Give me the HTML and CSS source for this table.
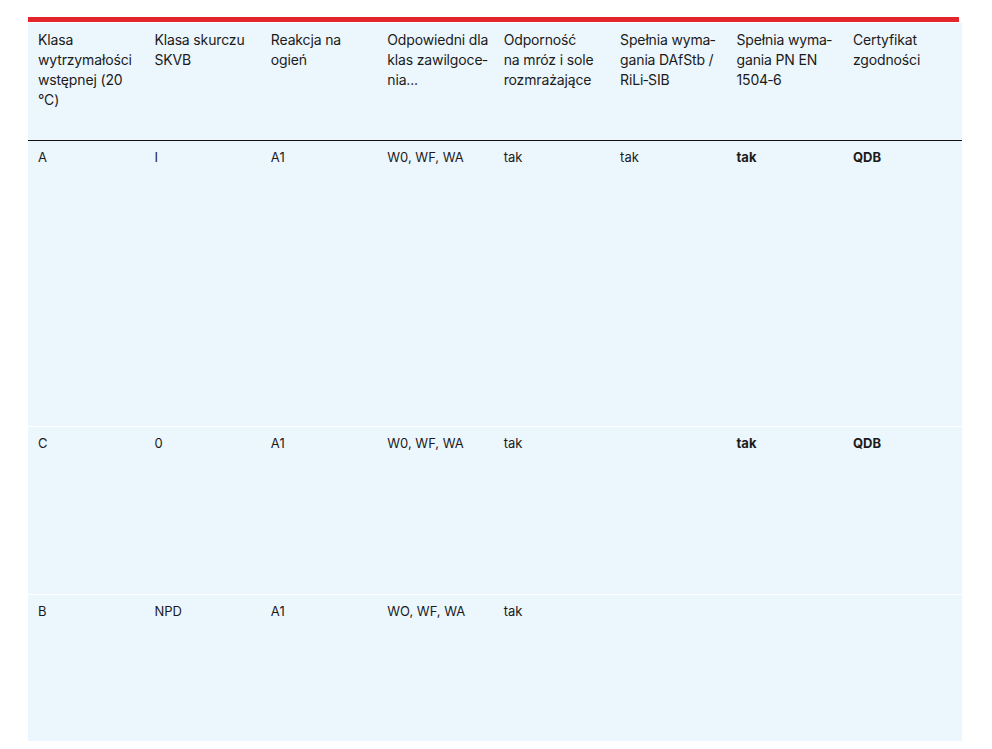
FILE: index.html
```html
<!DOCTYPE html>
<html lang="pl">
<head>
<meta charset="utf-8">
<link rel="stylesheet" href="styles.css">
</head>
<body>
<div class="wrap">
  <div class="redbar"></div>
  <table class="spec">
    <colgroup>
      <col class="c"><col class="c"><col class="c"><col class="c"><col class="c"><col class="c"><col class="c"><col>
    </colgroup>
    <thead>
      <tr class="head">
        <th>Klasa wytrzymałości wstępnej (20 °C)</th>
        <th>Klasa skurczu SKVB</th>
        <th>Reakcja na ogień</th>
        <th><span class="nw">Odpowiedni dla</span> klas zawilgoce&shy;nia...</th>
        <th>Odporność na&nbsp;mróz i&nbsp;sole rozmrażające</th>
        <th>Spełnia wyma&shy;gania DAfStb / RiLi&#8209;SIB</th>
        <th>Spełnia wyma&shy;gania PN EN 1504&#8209;6</th>
        <th>Certyfikat zgodności</th>
      </tr>
    </thead>
    <tbody>
      <tr class="r1">
        <td>A</td><td>I</td><td>A1</td><td>W0, WF, WA</td><td>tak</td><td>tak</td><td class="b">tak</td><td class="b">QDB</td>
      </tr>
      <tr class="r2">
        <td>C</td><td>0</td><td>A1</td><td>W0, WF, WA</td><td>tak</td><td></td><td class="b">tak</td><td class="b">QDB</td>
      </tr>
      <tr class="r3">
        <td>B</td><td>NPD</td><td>A1</td><td>WO, WF, WA</td><td>tak</td><td></td><td></td><td></td>
      </tr>
    </tbody>
  </table>
</div>
</body>
</html>
```
FILE: styles.css
```css
html, body {
  margin: 0;
  padding: 0;
  background: #ffffff;
}
body {
  font-family: Inter, "Noto Sans", sans-serif;
  font-size: 14px;
  line-height: 20px;
  color: #1b1b1b;
}
.wrap {
  padding: 17px 0 0 28px;
}
.redbar {
  width: 931px;
  height: 5px;
  background: #e3262b;
  margin-bottom: 1px;
}
.spec {
  width: 934px;
  table-layout: fixed;
  border-collapse: collapse;
}
.spec col.c {
  width: 116.43px;
}
.spec th,
.spec td {
  text-align: left;
  vertical-align: top;
  font-weight: 400;
  background: #ecf6fd;
  padding: 7px 6px 0 10px;
}
.spec th {
  letter-spacing: -0.15px;
}
.nw {
  white-space: nowrap;
}
.spec td {
  padding-top: 6px;
  font-size: 13px;
}
.head th {
  height: 110px;
  border-bottom: 1px solid #111111;
}
.spec tbody tr {
  border-top: 1px solid #ffffff;
}
.spec tbody tr.r1 {
  border-top: none;
}
.r1 td { height: 279px; }
.r2 td { height: 161px; }
.r3 td { height: 140px; }
.spec td.b {
  font-weight: 700;
}
```
